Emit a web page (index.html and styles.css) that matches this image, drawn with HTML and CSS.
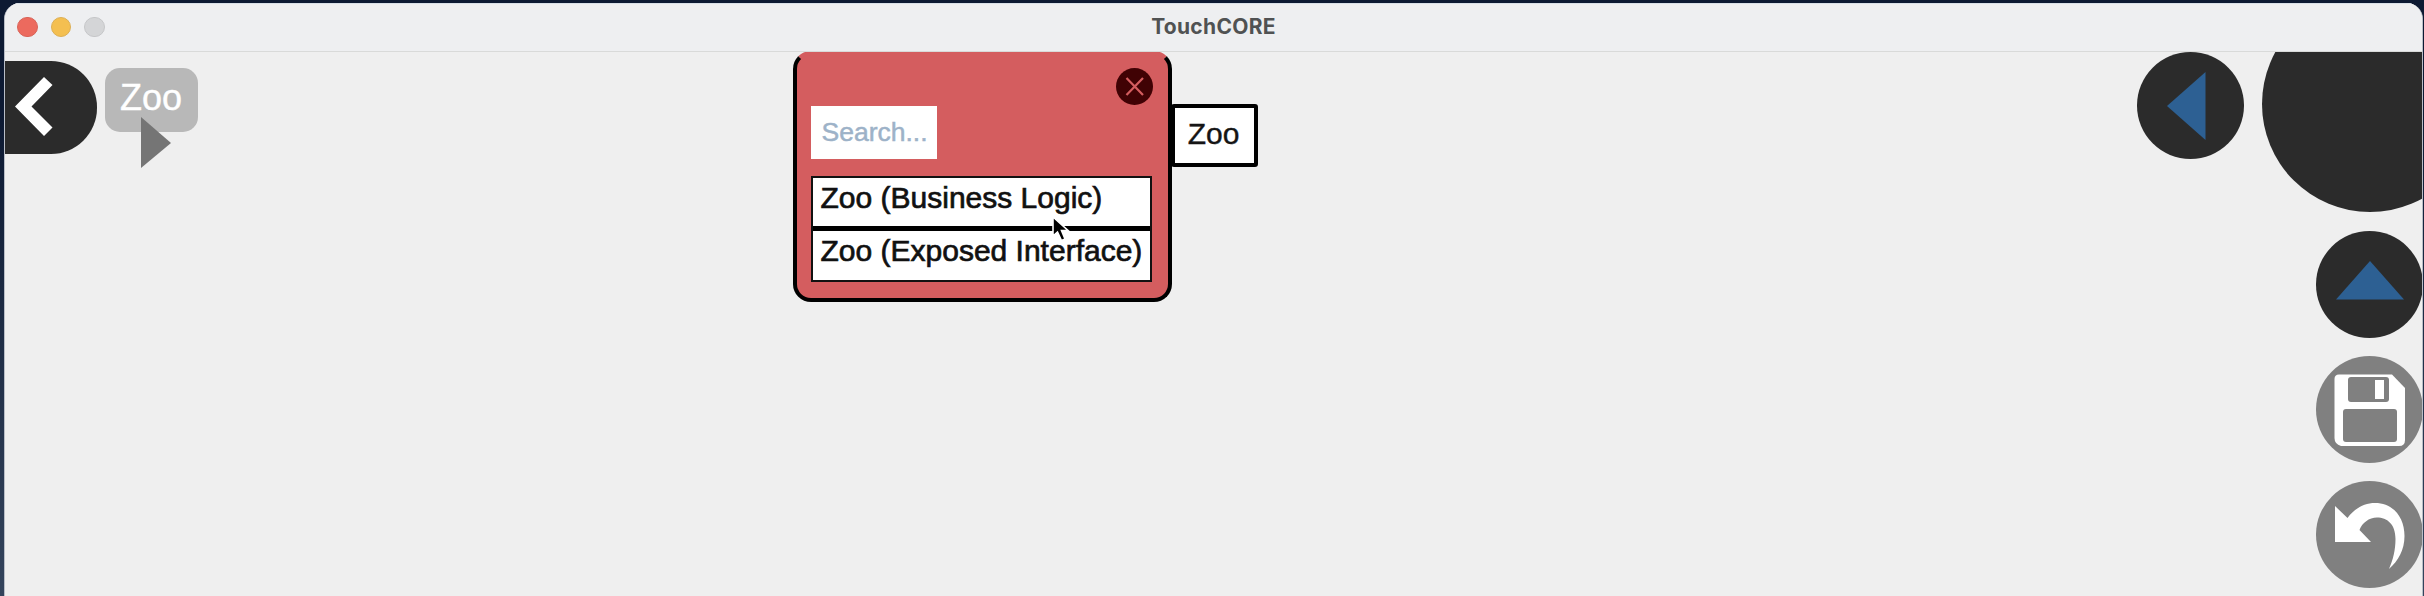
FILE: index.html
```html
<!DOCTYPE html>
<html lang="en">
<head>
<meta charset="utf-8">
<title>TouchCORE</title>
<link rel="stylesheet" href="styles.css">
</head>
<body>
<div class="window">
  <header class="titlebar">
    <div class="lights"><span class="light close"></span><span class="light minimize"></span><span class="light disabled"></span></div>
    <h1 class="title">TouchCORE</h1>
  </header>
  <main class="canvas">
    <nav class="breadcrumb">
      <button class="back" aria-label="Back"><svg width="93" height="93" viewBox="4 61 93 93"><path d="M15 106.500 44 77 52.500 85 31.500 106.500 52.500 127.500 44 136Z" fill="#fff"/></svg></button>
      <div class="crumb">Zoo<svg class="crumb-arrow" width="30" height="51" viewBox="0 0 30 51"><path d="M0 0 30 26 0 51Z" fill="#757575"/></svg></div>
    </nav>
    <section class="node">
      <div class="selector">
        <button class="dismiss" aria-label="Close"><svg width="37" height="37" viewBox="0 0 37 37"><circle cx="18.500" cy="18.500" r="18.500" fill="#400204"/><path d="M10.500 10 27 27M27 10 10.500 27" stroke="#d45d5f" stroke-width="2.200"/></svg></button>
        <div class="search">Search...</div>
        <ul class="options">
          <li class="option">Zoo (Business Logic)</li>
          <li class="option">Zoo (Exposed Interface)</li>
        </ul>
      </div>
      <div class="tag">Zoo</div>
      <svg class="cursor" width="22" height="28" viewBox="0 0 22 28"><path d="M2 1V20L6.500 16 10.500 24.500 14 23 10.500 14.500H17Z" fill="#000" stroke="#fff" stroke-width="1.600"/></svg>
    </section>
    <aside class="toolbar">
      <button class="round collapse" aria-label="Collapse"><svg width="107" height="107" viewBox="0 0 107 107"><circle cx="53.500" cy="53.500" r="53.500" fill="#2b2b2b"/><path d="M30 54 68.500 20V88Z" fill="#2d6093"/></svg></button>
      <div class="tools">
        <div class="menu-disc"></div>
        <button class="round up" aria-label="Up"><svg width="107" height="107" viewBox="0 0 107 107"><circle cx="53.500" cy="53.500" r="53.500" fill="#2b2b2b"/><path d="M54 30 88 68.500H20Z" fill="#2d6093"/></svg></button>
        <button class="round save" aria-label="Save"><svg width="107" height="107" viewBox="0 0 107 107"><circle cx="53.500" cy="53.500" r="53.500" fill="#808080"/><path d="M23 18.500H76L89 32V84Q89 90 83 90H25Q18.500 88 18.500 82V23Q18.500 18.500 23 18.500Z" fill="#fff"/><rect x="32" y="21" width="41" height="25" rx="3" fill="#808080"/><rect x="59" y="24" width="9" height="19" fill="#fff"/><rect x="27" y="53" width="54" height="33" rx="3" fill="#808080"/></svg></button>
        <button class="round undo" aria-label="Undo"><svg width="107" height="107" viewBox="0 0 107 107"><circle cx="53.500" cy="53.500" r="53.500" fill="#808080"/><path d="M19 25 31.500 37C38 28 48 22 59 22C77 22 88.500 36 88.500 55C88.500 69 82 80 73 88C77 79 79.500 69 79.500 58C79.500 43 71 36.500 61 36.500C53 36.500 46 42 43.500 49L55 61H19Z" fill="#fff"/></svg></button>
      </div>
    </aside>
  </main>
</div>
</body>
</html>
```

FILE: styles.css
```css
* { box-sizing: border-box; }
body {
  margin: 0;
  height: 596px;
  padding: 3px 1px 0 4px;
  overflow: hidden;
  background: linear-gradient(#0d1a33, #0d1a33 20%, #34445c);
  font-family: "Liberation Sans", Arial, sans-serif;
}
button { display: block; border: 0; padding: 0; background: none; }
svg { display: block; }
.window {
  height: 593px;
  overflow: hidden;
  border-radius: 16px 16px 0 0;
  border-left: 1px solid #b9bec7;
  border-right: 1px solid #b9bec7;
  background: #efefef;
}
.titlebar {
  display: grid;
  grid-template-columns: 1fr auto 1fr;
  align-items: center;
  height: 49px;
  border-top: 1px solid #d9e0e8;
  border-bottom: 1px solid #d9dad9;
  background: #eeeff1;
}
.lights { display: flex; gap: 13px; padding: 0 0 1px 12px; }
.light { width: 20.500px; height: 20.500px; border-radius: 50%; }
.close { background: #ec6a5e; border: 1px solid #d86358; }
.minimize { background: #f4bf50; border: 1px solid #dcaf54; }
.disabled { background: #d4d5d7; border: 1px solid #c5c6c8; }
.title {
  margin: 0;
  padding-bottom: 2px;
  font: 700 21px Inter, sans-serif;
  letter-spacing: .3px;
  color: #505253;
}
.canvas { position: relative; height: 544px; overflow: hidden; }
.breadcrumb { display: flex; gap: 8px; padding-top: 9px; margin-left: -1px; }
.back { width: 93px; height: 93px; background: #2b2b2b; border-radius: 0 46px 46px 0; }
.crumb {
  position: relative;
  width: 93px;
  height: 64px;
  margin-top: 7px;
  border-radius: 15px;
  background: #b8b8b8;
  color: #fff;
  font-size: 36px;
  line-height: 60px;
  text-align: center;
  text-indent: -1px;
  -webkit-text-stroke: .4px;
}
.crumb-arrow { position: absolute; left: 36px; top: 49px; }
.node { position: absolute; left: 787.500px; top: -1px; display: flex; align-items: flex-start; }
.selector {
  display: flex;
  flex-direction: column;
  width: 379px;
  height: 251px;
  padding: 13px 15px 0 14px;
  border: 4px solid #000;
  border-top-color: #d45d5f;
  border-radius: 18px;
  background: #d45d5f;
}
.dismiss { align-self: flex-end; }
.search {
  width: 126px;
  height: 53px;
  margin-top: 1px;
  padding-left: 11px;
  background: #fff;
  color: #9db2c8;
  font-size: 26.500px;
  line-height: 52px;
  -webkit-text-stroke: .5px;
}
.options {
  width: 341px;
  margin: 17px 0 0;
  padding: 0;
  list-style: none;
  border: 2px solid #111;
}
.option {
  height: 48px;
  padding-left: 8px;
  background: #fff;
  color: #111;
  font-size: 30px;
  line-height: 39px;
  white-space: nowrap;
  -webkit-text-stroke: .7px;
}
.option + .option { border-top: 5px solid #000; height: 54px; }
.tag {
  width: 87px;
  height: 63px;
  margin: 52.500px 0 0 -1px;
  border: 4px solid #000;
  border-radius: 3px;
  background: #fff;
  color: #151515;
  font-size: 30px;
  line-height: 51px;
  text-align: center;
  text-indent: -1px;
  -webkit-text-stroke: .4px;
}
.cursor { position: absolute; left: 258px; top: 165px; }
.toolbar { position: absolute; top: 0; right: -1px; display: flex; align-items: flex-start; gap: 18px; }
.tools { display: flex; flex-direction: column; align-items: flex-end; width: 161px; }
.menu-disc { width: 216px; height: 216px; margin: -56px -55px 19px 0; border-radius: 50%; background: #2b2b2b; }
.round { width: 107px; height: 107px; }
.save { margin-top: 18px; }
.undo { margin-top: 18px; }
```
